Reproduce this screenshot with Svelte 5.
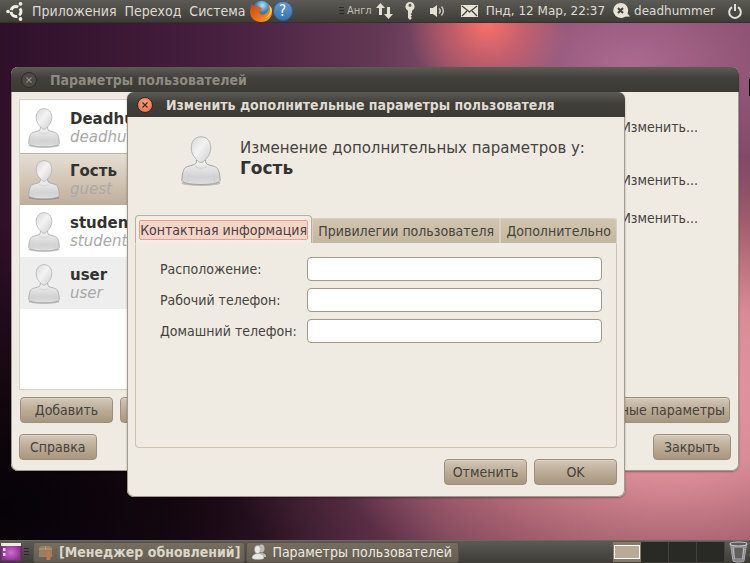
<script>
  const users = [
    { name: 'Deadhummer', login: 'deadhummer' },
    { name: 'Гость', login: 'guest' },
    { name: 'students', login: 'students' },
    { name: 'user', login: 'user' }
  ];
  const tabs = ['Контактная информация', 'Привилегии пользователя', 'Дополнительно'];
  const fields = [
    { id: 'location', label: 'Расположение:' },
    { id: 'work', label: 'Рабочий телефон:' },
    { id: 'home', label: 'Домашний телефон:' }
  ];
  let selected = $state(1);
  let active = $state(0);
  let workspace = $state(0);
</script>

{#snippet avatar()}
  <svg class="avatar" viewBox="0 0 40 50" aria-hidden="true">
    <defs>
      <linearGradient id="head" x1="0" y1="0" x2="1" y2="1">
        <stop offset="0" stop-color="#d6d6d6" />
        <stop offset=".45" stop-color="#f3f3f3" />
        <stop offset="1" stop-color="#cfcfcf" />
      </linearGradient>
      <linearGradient id="torso" x1="0" y1="0" x2="0" y2="1">
        <stop offset="0" stop-color="#f4f4f4" />
        <stop offset=".7" stop-color="#d2d2d2" />
        <stop offset="1" stop-color="#dedede" />
      </linearGradient>
    </defs>
    <ellipse cx="20" cy="47" rx="19.500" ry="3" fill="#000" opacity=".2" />
    <path d="M15.500 24c0 3-.5 4-3.500 5-6 1.500-8.500 2-9.500 5.500C1.300 38 .9 41 .9 44.500c2 3 9 4 19.100 4s17.100-1 19.100-4c0-3.500-.4-6.500-1.600-10C36.500 31 34 30.500 28 29c-3-1-3.500-2-3.500-5z" fill="url(#torso)" stroke="#a3a3a3" />
    <path d="M7.500 38c-1 3-1 5-1 8M32.500 38c1 3 1 5 1 8M14 30c4 3 8 3 12 0" fill="none" stroke="#cfcfcf" />
    <path d="M20 .8c6 0 9.800 4.500 9.800 11.200 0 5-2.500 8.500-5.300 11.500-1.500 2-3 3-4.500 3s-3-1-4.500-3c-2.800-3-5.300-6.500-5.300-11.500C10.200 5.300 14 .8 20 .8z" fill="url(#head)" stroke="#b3b3b3" />
  </svg>
{/snippet}

{#snippet cross()}
  <svg width="6" height="6" viewBox="0 0 6 6" aria-hidden="true"><path d="m.5.5 5 5m0-5-5 5" stroke="currentColor" stroke-width="1.200" /></svg>
{/snippet}

<div class="desktop">
  <header class="panel top">
    <nav>
      <svg width="18" height="20" viewBox="0 0 18 20" aria-hidden="true">
        <circle cx="10" cy="10.500" r="5" fill="none" stroke="#f1eee4" stroke-width="3" stroke-dasharray="8.500 2" stroke-dashoffset="4.200" />
        <g fill="#f1eee4"><circle cx="2" cy="10.500" r="1.800" /><circle cx="14.500" cy="2.800" r="1.900" /><circle cx="14.500" cy="18" r="1.900" /></g>
      </svg>
      <button class="menu">Приложения</button>
      <button class="menu">Переход</button>
      <button class="menu">Система</button>
    </nav>
    <button class="bare" aria-label="Firefox">
      <svg width="24" height="22" viewBox="0 0 24 22">
        <defs>
          <radialGradient id="globe" cx=".55" cy=".25" r=".7"><stop offset="0" stop-color="#b5e4fa" /><stop offset=".5" stop-color="#3987c6" /><stop offset="1" stop-color="#173a78" /></radialGradient>
          <linearGradient id="fox" x1="0" y1="0" x2="1" y2="1"><stop offset="0" stop-color="#c64212" /><stop offset=".6" stop-color="#ed7218" /><stop offset="1" stop-color="#f7b72f" /></linearGradient>
        </defs>
        <circle cx="12.500" cy="10" r="9.200" fill="url(#globe)" />
        <path d="M3 3c0 2 1 3 2 3 2-1 4 0 5 1l3 1c0 2-3 2-3 4 1 3 5 3 7 1 3-2 3-5 2-9 3 2 4 5 4 8 0 6-5 10-11 10S1 18 1 11c0-3 1-6 2-8z" fill="url(#fox)" />
        <path d="M20 5c2 5 1 10-4 13 5-1 8-6 6.500-10z" fill="#fbd24a" />
      </svg>
    </button>
    <button class="bare help" aria-label="Справка по системе">?</button>
    <div class="tray">
      <i class="grip"></i>
      <span class="lang">Англ</span>
      <svg class="net" width="17" height="16" viewBox="0 0 17 16" aria-hidden="true"><path d="M4.500 0 0 5h3v7h3V5h3zM12.500 16l4.500-5h-3V4h-3v7H8z" fill="#e2dfd3" /></svg>
      <svg class="key" width="10" height="18" viewBox="0 0 10 18" aria-hidden="true"><path fill-rule="evenodd" d="M5 0a4.600 4.600 0 0 1 2 8.700V11l-1.500 1L7 13.500 5.500 15 7 16l-2 2-2-2V8.700A4.600 4.600 0 0 1 5 0zm0 1.800a1.500 1.500 0 1 0 0 3 1.500 1.500 0 0 0 0-3z" fill="#e2dfd3" /></svg>
      <svg class="sound" width="17" height="14" viewBox="0 0 17 14" aria-hidden="true"><path d="M0 4h3l4-3v12l-4-3H0z" fill="#e2dfd3" /><path d="M9 4.500c1.500 1.500 1.500 3.500 0 5M11.500 2.500c2.500 3 2.500 6 0 9" fill="none" stroke="#c6c3b8" stroke-width="1.500" /></svg>
      <svg class="mail" width="17" height="12" viewBox="0 0 17 12" aria-hidden="true"><path d="M0 0h17v12H0z" fill="#e8e4d8" /><path d="m1 1 7.500 6L16 1M1 11l5-5M16 11l-5-5" fill="none" stroke="#44433d" stroke-width="1.300" /></svg>
      <time>Пнд, 12 Мар, 22:37</time>
      <svg class="status" width="17" height="16" viewBox="0 0 17 16" aria-hidden="true"><path d="M7.500 0a7.500 7.500 0 0 1 7 10.500L17 13.500l-5 .2A7.500 7.500 0 1 1 7.500 0z" fill="#e8e4d8" /><path d="m5 5 5 5m0-5-5 5" stroke="#44433d" stroke-width="2" /></svg>
      <span>deadhummer</span>
      <svg class="power" width="14" height="15" viewBox="0 0 14 15" aria-hidden="true"><path d="M4 3.200a5.800 5.800 0 1 0 6 0M7 0v7" fill="none" stroke="#e2dfd3" stroke-width="2" /></svg>
    </div>
  </header>

  <main>
    <section class="window users" aria-label="Параметры пользователей">
      <div class="title dim">
        <button class="close" aria-label="Закрыть окно">{@render cross()}</button>
        <h2>Параметры пользователей</h2>
      </div>
      <div class="content">
        <div class="columns">
          <ul>
            {#each users as user, i}
              <li>
                <button class="user" class:selected={selected === i} onclick={() => (selected = i)}>
                  {@render avatar()}
                  <span><b>{user.name}</b><em>{user.login}</em></span>
                </button>
              </li>
            {/each}
          </ul>
          <div class="details">
            <button class="flat">Изменить...</button>
            <button class="flat wide">Изменить...</button>
            <button class="flat">Изменить...</button>
          </div>
        </div>
        <div class="row actions">
          <button class="btn add">Добавить</button>
          <button class="btn add">Удалить</button>
          <button class="btn last">Дополнительные параметры</button>
        </div>
        <div class="row footer">
          <button class="btn">Справка</button>
          <button class="btn last">Закрыть</button>
        </div>
      </div>
    </section>

    <section class="window dialog" role="dialog" aria-label="Изменить дополнительные параметры пользователя">
      <div class="title">
        <button class="close" aria-label="Закрыть диалог">{@render cross()}</button>
        <h2>Изменить дополнительные параметры пользователя</h2>
      </div>
      <div class="content">
        <div class="intro">
          {@render avatar()}
          <p>Изменение дополнительных параметров у:<b>Гость</b></p>
        </div>
        <div class="tabs" role="tablist">
          {#each tabs as tab, i}
            <button role="tab" aria-selected={active === i} class:active={active === i} onclick={() => (active = i)}><span>{tab}</span></button>
          {/each}
        </div>
        <form class="page" role="tabpanel">
          {#each fields as field}
            <label for={field.id}>{field.label}</label>
            <input id={field.id} type="text" />
          {/each}
        </form>
        <div class="row confirm">
          <button class="btn">Отменить</button>
          <button class="btn">OK</button>
        </div>
      </div>
    </section>
    <i class="pointer"></i>
  </main>

  <footer class="panel bottom">
    <button class="bare" aria-label="Показать рабочий стол">
      <svg width="22" height="18" viewBox="0 0 22 18">
        <defs><radialGradient id="desk"><stop offset="0" stop-color="#cf6fd0" /><stop offset="1" stop-color="#8f3092" /></radialGradient></defs>
        <rect x="1" y="1" width="20" height="17" rx="1" fill="url(#desk)" stroke="#5c2a5c" />
        <path d="M1 0h20v3H1z" fill="#eeeadd" /><path d="M3 5h2.500v3H3zM3 10h2.500v3H3z" fill="#f0d8f0" />
      </svg>
    </button>
    <i class="grip"></i>
    <button class="task urgent">
      <svg width="16" height="15" viewBox="0 0 16 15" aria-hidden="true"><path d="M1 3l2-2h9l2 2v9H1z" fill="#96805f" /><path d="M1 4h13M7.500 1v4" stroke="#b09c80" /><path d="M10.500 6 15 10.500h-2.500V15h-4v-4.500H6z" fill="#b87850" /></svg>
      [Менеджер обновлений]
    </button>
    <button class="task">
      <svg width="16" height="16" viewBox="0 0 16 16" aria-hidden="true"><g fill="#bdbbb5"><ellipse cx="10.500" cy="4.500" rx="3" ry="4" /><path d="M6 12c0-4 9-4 9 0v1H6z" /></g><g fill="#e9e8e4" stroke="#999" stroke-width=".5"><path d="M1 14c0-6 12-6 12 0 0 2-12 2-12 0z" /><ellipse cx="6.500" cy="5.500" rx="3" ry="4" /></g></svg>
      Параметры пользователей
    </button>
    <div class="spaces">
      {#each [0, 1, 2, 3] as n}
        <button class:current={workspace === n} aria-label={`Рабочее место ${n + 1}`} onclick={() => (workspace = n)}></button>
      {/each}
    </div>
    <button class="bare" aria-label="Корзина">
      <svg width="22" height="22" viewBox="0 0 22 22"><path d="M2.500 3h16L16 20c-2 1.500-9 1.500-11 0z" fill="#85858a" stroke="#a9a9ac" /><path d="M6.500 7h8v10h-8z" fill="#5f5f5b" /><path d="M5 6l1.500 12M16 6l-1.500 12" stroke="#bcbcbe" /><ellipse cx="10.500" cy="3" rx="8.500" ry="2" fill="#5c5c5c" stroke="#c9c9cc" stroke-width="1.200" /></svg>
    </button>
  </footer>
</div>

<style>
  :global(body) { margin: 0; }
  * { box-sizing: border-box; }
  button { margin: 0; padding: 0; border: 0; background: none; font: inherit; color: inherit; white-space: nowrap; }
  svg { display: block; flex: none; }
  .desktop {
    display: flex; flex-direction: column; height: 100vh; overflow: hidden;
    font: 14px/16px "DejaVu Sans Condensed", "DejaVu Sans", sans-serif; color: #45433e;
    background:
      radial-gradient(circle at 65% 4%, #fb7168 0, #f0696890 5%, transparent 11%),
      radial-gradient(ellipse 34% 30% at 84% 12%, #ad6a90 0, #a2628880 50%, transparent 100%),
      radial-gradient(ellipse 62% 54% at 89% 69%, #e59ba2 0, #d88b95 30%, #b06672d0 55%, #6b354c70 78%, transparent 100%),
      radial-gradient(ellipse 60% 50% at 0 90%, #050207 0, #14070f 40%, transparent 100%),
      linear-gradient(90deg, #2e1029 0, #482040 30%, #70435e 60%, #7d4663 100%);
  }
  .panel { display: flex; align-items: center; flex: none; color: #dfdbd2; background: linear-gradient(#5b5a54, #3d3c37); }
  .top { height: 23px; border-bottom: 1px solid #35302e; }
  nav { display: flex; align-items: center; gap: 8px; padding: 0 3px 0 6px; }
  .help { width: 20px; height: 20px; border-radius: 50%; background: linear-gradient(#6699cc, #3672b3); border: 1px solid #2f629d; color: #fff; font-size: 15px; line-height: 18px; }
  .tray { display: flex; align-items: center; margin-left: auto; padding-right: 8px; font: 12px/16px "DejaVu Sans", sans-serif; }
  .grip { width: 5px; height: 8px; background: repeating-linear-gradient(#2c2b28 0 1px, transparent 1px 3px); }
  .lang { margin: 0 4px 0 3px; font: 11px/16px "Liberation Sans Narrow", "DejaVu Sans Condensed", sans-serif; color: #c2bfb5; }
  .key { margin-left: 12px; }
  .sound { margin-left: 15px; }
  .mail { margin: 0 8px 0 14px; }
  .status { margin: 0 4px 0 8px; }
  .power { margin-left: 13px; }

  main { position: relative; flex: 1; min-height: 0; }
  .window { position: absolute; border-radius: 7px; background: #efebe3; box-shadow: 0 0 0 1px #a3998c inset, 0 1px 2px #0005; }
  .title { display: flex; align-items: center; gap: 13px; height: 25px; padding: 0 10px; border-radius: 7px 7px 0 0; background: linear-gradient(#5d5b54 0, #403f3a 45%, #3b3a35 100%); color: #dfdbd2; }
  h2 { margin: 0; font-size: 14px; line-height: 16px; font-weight: bold; white-space: nowrap; }
  .close { display: grid; place-items: center; width: 16px; height: 16px; border-radius: 50%; border: 1px solid #2c2b27; background: radial-gradient(circle at 50% 35%, #f5a681, #e2673c); color: #4a2416; }
  .dim { color: #8f8b81; }
  .dim .close { background: #4b4a45; color: #8f8b81; }

  .users { top: 44px; left: 11px; right: 11px; }
  .users .content { padding: 7px 8px 11px; }
  .columns { display: flex; height: 291px; }
  ul { width: 220px; margin: 0; padding: 1px 0 0; list-style: none; background: #fff; border: 1px solid #d9d2c4; }
  li:nth-child(4) { background: #eee; }
  .user { display: flex; align-items: center; gap: 10px; width: 100%; height: 52px; padding: 0 8px; text-align: left; border-top: 1px solid transparent; font-family: "DejaVu Sans", sans-serif; }
  .user.selected { background: linear-gradient(#e6dfd4, #bfae98); border-top-color: #bcb1a2; }
  .user .avatar { width: 32px; height: 40px; }
  .user span { display: flex; flex-direction: column; }
  b, em { font-size: 15px; line-height: 18px; }
  b { color: #33322f; }
  em { color: #a9a9a9; }
  .details { display: flex; flex-direction: column; align-items: flex-end; flex: 1; padding: 20px 33px 0 0; }
  .flat { line-height: 16px; }
  .wide { margin: 37px 0 22px; }
  .row { display: flex; }
  .btn { height: 26px; padding: 0 10px; border: 1px solid #9d8f7c; border-radius: 4px; background: linear-gradient(#d3c8ba, #bcac97 50%, #a8967e); box-shadow: inset 0 1px #ded5c8; }
  .last { margin-left: auto; }
  .actions { gap: 7px; padding: 7px 1px 0; }
  .actions .btn { padding: 0 4px; }
  .actions .add { width: 93px; }
  .footer { padding-top: 11px; }

  .dialog { top: 69px; left: 127px; right: 125px; }
  .dialog .content { padding: 0 8px 12px; }
  .intro { display: flex; gap: 19px; height: 98px; padding: 19px 0 0 46px; }
  .intro .avatar { width: 40px; height: 50px; }
  .intro p { margin: 0; padding-top: 2px; font: 15px/20px "DejaVu Sans", sans-serif; white-space: nowrap; }
  .intro b { display: block; font-size: 17px; line-height: 20px; }
  .tabs { display: flex; align-items: flex-end; }
  .tabs button { flex: 1 1 auto; height: 25px; padding: 0 5px; background: linear-gradient(#d0c5af, #c4b79f); border: 1px solid #d8cfbc; border-bottom: 0; }
  .tabs button:last-child { border-radius: 0 3px 0 0; }
  .tabs .active { z-index: 1; height: 28px; padding: 0 3px; background: #f1ece4; border-color: #b9af9f; border-radius: 4px 4px 0 0; }
  .active span { display: block; padding: 1px 0; border: 1px solid #e9a08a; border-radius: 2px; background: #f5d5c8; }
  .page { display: grid; grid-template-columns: 140px 1fr; grid-auto-rows: 24px; gap: 7px; align-items: center; height: 205px; padding: 13px 14px 0 24px; border: 1px solid #cfc4b0; border-top-color: #efebe3; border-radius: 0 0 4px 4px; }
  label { white-space: nowrap; }
  input { width: 100%; height: 24px; padding: 0 5px; border: 1px solid #a3988a; border-radius: 4px; background: #fff; font: inherit; }
  .confirm { justify-content: flex-end; gap: 7px; padding-top: 11px; }
  .confirm .btn { width: 83px; padding: 0; }
  .pointer { position: absolute; top: 56px; right: 0; width: 1px; height: 17px; background: #000; }

  .bottom { height: 23px; border-top: 1px solid #6b6761; }
  .bottom .grip { margin: 0 4px 0 2px; }
  .task { display: flex; align-items: center; gap: 5px; height: 21px; margin-right: 1px; padding: 0 6px 0 4px; border: 1px solid #57534b; border-radius: 3px; background: linear-gradient(#766d60, #655d51); color: #eeeae1; }
  .urgent { padding-right: 4px; font-weight: bold; color: #dcd6c8; }
  .spaces { display: flex; margin-left: auto; margin-right: 3px; }
  .spaces button { width: 28px; height: 20px; border-right: 1px solid #43423e; background: #292926; }
  .spaces .current { border: 0; background: linear-gradient(#b9aa96, #b9aa96) center / 24px 12px no-repeat, linear-gradient(#fff, #fff) center / 26px 14px no-repeat, #887a66; }
</style>
